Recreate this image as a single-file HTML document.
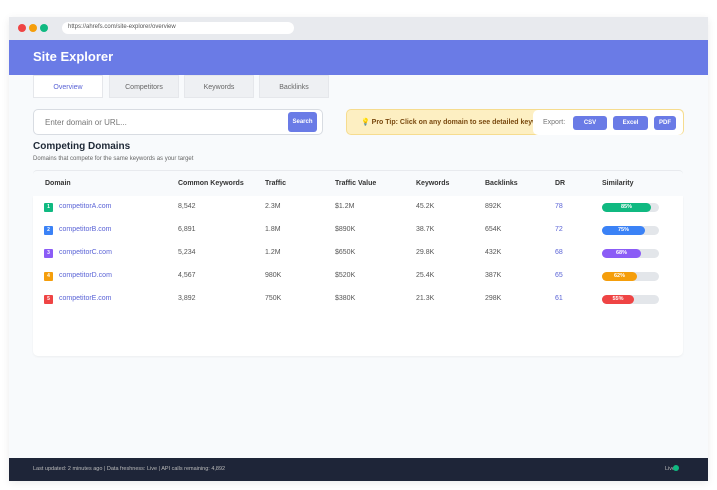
<!DOCTYPE html><html><head><style>
*{margin:0;padding:0;box-sizing:border-box}
body{width:717px;height:490px;background:#fff;font-family:"Liberation Sans",sans-serif;position:relative;overflow:hidden}
.a{position:absolute}
.win{left:9px;top:17px;width:699px;height:464px;background:#f8fafc;box-shadow:0 2px 8px rgba(0,0,0,.08)}
.tb{left:9px;top:17px;width:699px;height:23px;background:#e8eaee}
.dot{width:8px;height:8px;border-radius:50%;top:24px}
.url{left:62px;top:22px;width:232px;height:12px;background:#fff;border-radius:6px;font-size:6px;color:#555;padding:2px 6px}
.hdr{left:9px;top:40px;width:699px;height:35px;background:#6a7be6;color:#fff;font-weight:bold;font-size:13px;padding:9px 24px}
.tab{top:75px;height:23px;width:70px;background:#eef0f3;font-size:7px;color:#666;text-align:center;line-height:23px;border:1px solid #e5e7eb}
.srch{left:33px;top:109px;width:290px;height:26px;background:#fff;border:1px solid #d8dce2;border-radius:5px;font-size:8px;color:#777;padding:8px 11px}
.btn{background:#6a7be6;color:#fff;font-size:6px;font-weight:bold;text-align:center;border-radius:3px}
.tip{left:346px;top:109px;width:338px;height:26px;background:#fdefc2;border:1px solid #f6dc8f;border-radius:5px;font-size:7px;color:#7a4a10;font-weight:bold;padding:8px 14px;overflow:hidden;white-space:nowrap}
.exp{left:533px;top:110px;width:150px;height:25px;background:#fff;border-radius:5px;font-size:7px;color:#777}
.card{left:33px;top:170px;width:650px;height:186px;border-top:1px solid #e8eaee;border-radius:4px}
.rows{left:33px;top:196px;width:650px;height:160px;background:#fff;border-radius:0 0 5px 5px;box-shadow:0 1px 2px rgba(0,0,0,.05)}
.th{top:180px;font-size:7px;font-weight:bold;color:#333}
.td{font-size:7px;color:#555}
.dm{font-size:7px;color:#5a63d6}
.bd{width:9px;height:9px;border-radius:1px;color:#fff;font-size:5px;text-align:center;line-height:9px;font-weight:bold}
.bar{left:602px;width:57px;height:9px;background:#e3e6ea;border-radius:5px}
.fill{height:9px;border-radius:5px;color:#fff;font-size:5.5px;font-weight:bold;text-align:center;line-height:9px}
.ft{left:9px;top:458px;width:699px;height:23px;background:#1e2538;color:#bbb;font-size:5.5px;padding:8px 24px}
</style></head><body>
<div class="a win"></div>
<div class="a tb"></div>
<div class="a dot" style="left:18px;background:#ef4444"></div>
<div class="a dot" style="left:29px;background:#f59e0b"></div>
<div class="a dot" style="left:40px;background:#10b981"></div>
<div class="a url">https://ahrefs.com/site-explorer/overview</div>
<div class="a hdr">Site Explorer</div>
<div class="a tab" style="left:33px;background:#fff;color:#5a63d6">Overview</div>
<div class="a tab" style="left:109px">Competitors</div>
<div class="a tab" style="left:184px">Keywords</div>
<div class="a tab" style="left:259px">Backlinks</div>
<div class="a srch">Enter domain or URL...</div>
<div class="a btn" style="left:288px;top:112px;width:29px;height:20px;line-height:20px">Search</div>
<div class="a tip">💡 Pro Tip: Click on any domain to see detailed keyword overlap</div>
<div class="a exp"><span class="a" style="left:10px;top:9px">Export:</span></div>
<div class="a btn" style="left:573px;top:116px;width:34px;height:14px;line-height:14px">CSV</div>
<div class="a btn" style="left:613px;top:116px;width:35px;height:14px;line-height:14px">Excel</div>
<div class="a btn" style="left:654px;top:116px;width:22px;height:14px;line-height:14px">PDF</div>
<div class="a" style="left:33px;top:141px;font-size:10px;font-weight:bold;color:#1f2937">Competing Domains</div>
<div class="a" style="left:33px;top:156px;font-size:6px;color:#666">Domains that compete for the same keywords as your target</div>
<div class="a card"></div>
<div class="a rows"></div>
<div class="a th" style="left:45px">Domain</div>
<div class="a th" style="left:178px">Common Keywords</div>
<div class="a th" style="left:265px">Traffic</div>
<div class="a th" style="left:335px">Traffic Value</div>
<div class="a th" style="left:416px">Keywords</div>
<div class="a th" style="left:485px">Backlinks</div>
<div class="a th" style="left:555px">DR</div>
<div class="a th" style="left:602px">Similarity</div>
<div class="a bd" style="left:44px;top:203px;background:#10b981">1</div><div class="a dm" style="left:59px;top:203px">competitorA.com</div><div class="a td" style="left:178px;top:203px">8,542</div><div class="a td" style="left:265px;top:203px">2.3M</div><div class="a td" style="left:335px;top:203px">$1.2M</div><div class="a td" style="left:416px;top:203px">45.2K</div><div class="a td" style="left:485px;top:203px">892K</div><div class="a dm" style="left:555px;top:203px">78</div><div class="a bar" style="top:203px"><div class="fill" style="width:49px;background:#10b981">85%</div></div>
<div class="a bd" style="left:44px;top:226px;background:#3b82f6">2</div><div class="a dm" style="left:59px;top:226px">competitorB.com</div><div class="a td" style="left:178px;top:226px">6,891</div><div class="a td" style="left:265px;top:226px">1.8M</div><div class="a td" style="left:335px;top:226px">$890K</div><div class="a td" style="left:416px;top:226px">38.7K</div><div class="a td" style="left:485px;top:226px">654K</div><div class="a dm" style="left:555px;top:226px">72</div><div class="a bar" style="top:226px"><div class="fill" style="width:43px;background:#3b82f6">75%</div></div>
<div class="a bd" style="left:44px;top:249px;background:#8b5cf6">3</div><div class="a dm" style="left:59px;top:249px">competitorC.com</div><div class="a td" style="left:178px;top:249px">5,234</div><div class="a td" style="left:265px;top:249px">1.2M</div><div class="a td" style="left:335px;top:249px">$650K</div><div class="a td" style="left:416px;top:249px">29.8K</div><div class="a td" style="left:485px;top:249px">432K</div><div class="a dm" style="left:555px;top:249px">68</div><div class="a bar" style="top:249px"><div class="fill" style="width:39px;background:#8b5cf6">68%</div></div>
<div class="a bd" style="left:44px;top:272px;background:#f59e0b">4</div><div class="a dm" style="left:59px;top:272px">competitorD.com</div><div class="a td" style="left:178px;top:272px">4,567</div><div class="a td" style="left:265px;top:272px">980K</div><div class="a td" style="left:335px;top:272px">$520K</div><div class="a td" style="left:416px;top:272px">25.4K</div><div class="a td" style="left:485px;top:272px">387K</div><div class="a dm" style="left:555px;top:272px">65</div><div class="a bar" style="top:272px"><div class="fill" style="width:35px;background:#f59e0b">62%</div></div>
<div class="a bd" style="left:44px;top:295px;background:#ef4444">5</div><div class="a dm" style="left:59px;top:295px">competitorE.com</div><div class="a td" style="left:178px;top:295px">3,892</div><div class="a td" style="left:265px;top:295px">750K</div><div class="a td" style="left:335px;top:295px">$380K</div><div class="a td" style="left:416px;top:295px">21.3K</div><div class="a td" style="left:485px;top:295px">298K</div><div class="a dm" style="left:555px;top:295px">61</div><div class="a bar" style="top:295px"><div class="fill" style="width:32px;background:#ef4444">55%</div></div>
<div class="a ft">Last updated: 2 minutes ago | Data freshness: Live | API calls remaining: 4,892<span class="a" style="left:656px;top:8px">Live</span><span class="a" style="left:664px;top:7px;width:6px;height:6px;border-radius:50%;background:#10b981"></span></div>
</body></html>
